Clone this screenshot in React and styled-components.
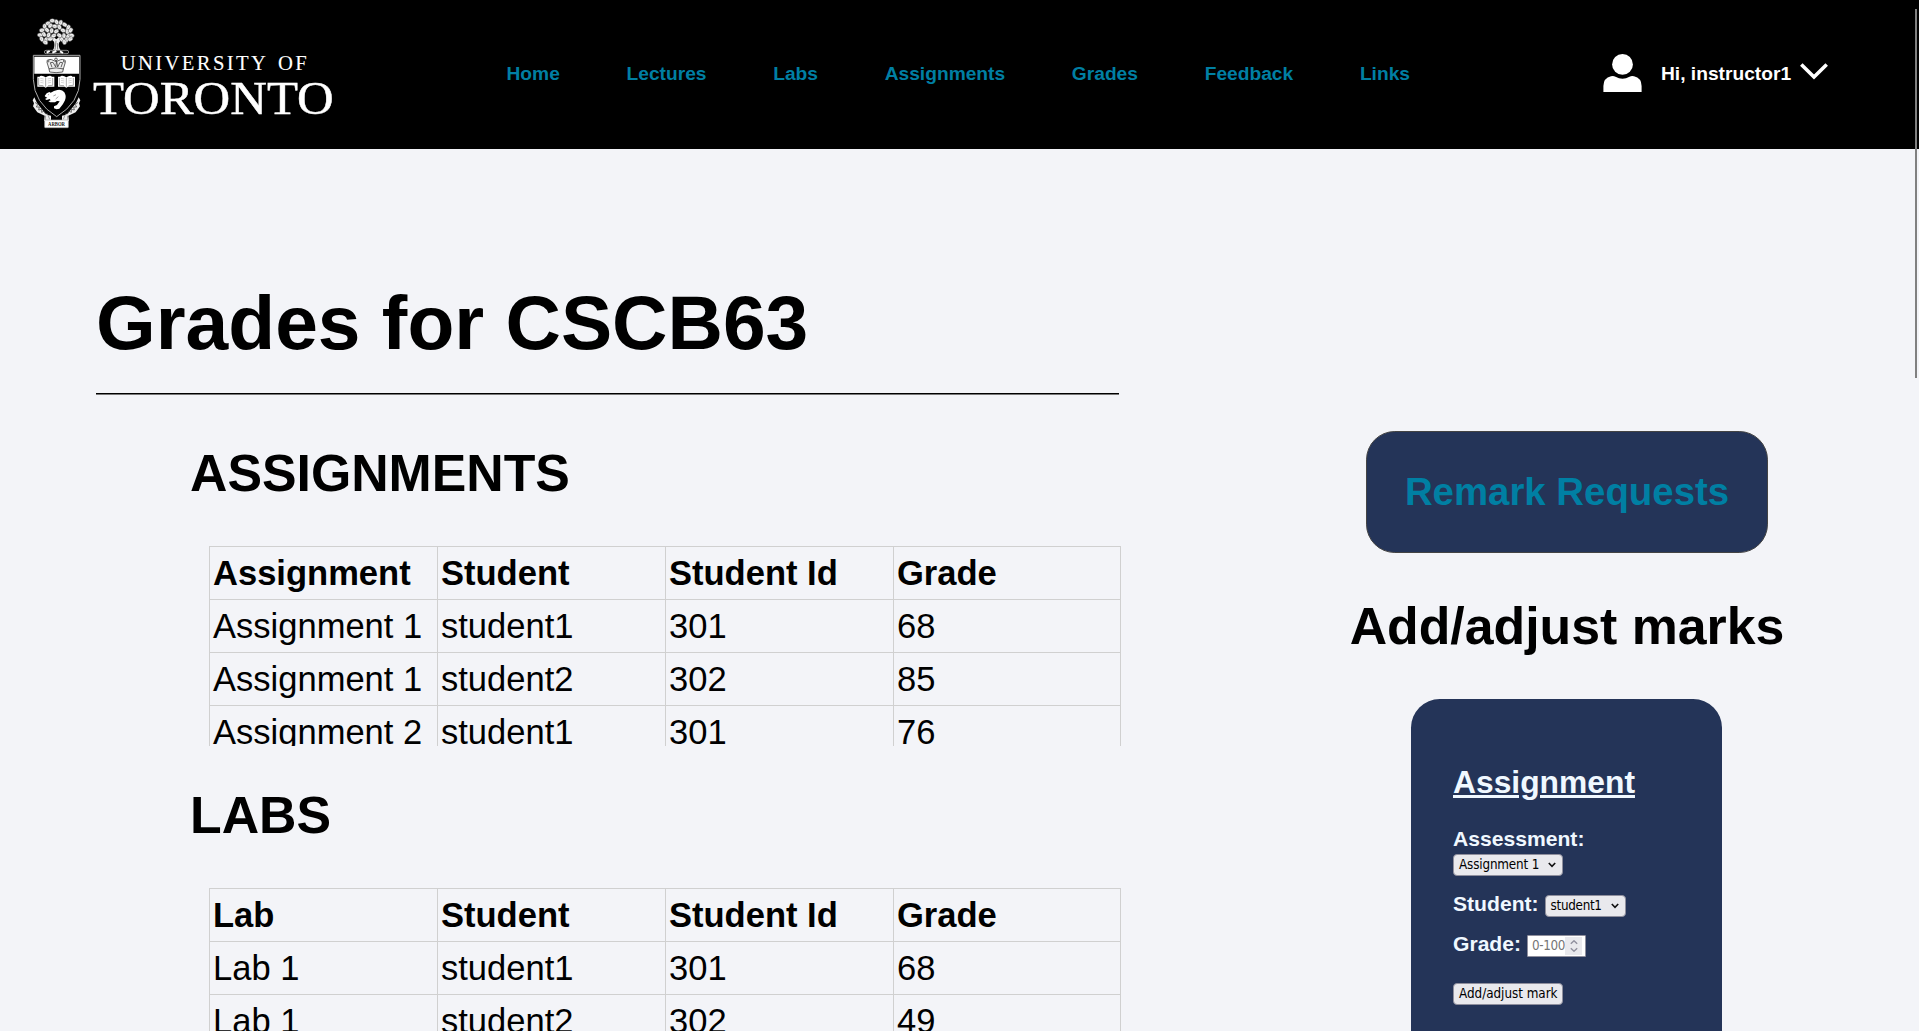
import React from "react";
import styled, { createGlobalStyle } from "styled-components";

const GlobalStyle = createGlobalStyle`
  * { box-sizing: border-box; }
  html, body {
    margin: 0;
    height: 1031px;
    overflow: hidden;
    background: #f3f4f8;
    color: #000;
    font-family: Arial, "Liberation Sans", sans-serif;
  }
`;

const Page = styled.div`
  height: 1031px;
  overflow: hidden;
`;

const Header = styled.header`
  display: flex;
  align-items: flex-start;
  height: 149px;
  padding-left: 20px;
  background: #000;
`;

const Logo = styled.svg`
  flex: none;
  width: 330px;
  height: 149px;
`;

const Nav = styled.nav`
  display: flex;
  flex: none;
  gap: 66.7px;
  width: 1040px;
  padding: 63px 0 0 156.5px;
`;

const NavLink = styled.a`
  color: #007fa3;
  font-size: 19.19px;
  font-weight: bold;
  line-height: 22px;
  white-space: nowrap;
`;

const User = styled.div`
  display: flex;
  align-items: flex-start;
  padding: 53px 0 0 213px;
`;

const Avatar = styled.svg`
  width: 39px;
  height: 39px;
  margin-top: 1px;
`;

const Greeting = styled.span`
  width: 129px;
  margin: 10px 9px 0 19px;
  color: #fff;
  font-size: 19.19px;
  font-weight: bold;
  line-height: 22px;
  white-space: nowrap;
`;

const MenuArrow = styled.svg`
  width: 30px;
  height: 20px;
  margin-top: 8px;
`;

const Main = styled.main`
  display: flex;
  justify-content: space-between;
`;

const GradesColumn = styled.div`
  width: 1121px;
  padding: 130px 0 0 96px;
`;

const Title = styled.h1`
  margin: 0;
  font-size: 76.76px;
  line-height: 88px;
`;

const Rule = styled.div`
  width: 1023px;
  height: 2px;
  margin: 26px 0 48px;
  border-top: 1px solid #000;
  border-bottom: 1px solid #777;
`;

const SectionTitle = styled.h2`
  margin: 0 0 43px;
  font-size: 51.8px;
  line-height: 60px;
  white-space: nowrap;
`;

const Section = styled.section`
  margin: 0 0 39px 94px;
`;

const TableWindow = styled.div`
  width: 912px;
  height: 200px;
  margin-left: 19px;
  overflow: hidden;
`;

const Row = styled.div`
  display: grid;
  grid-template-columns: repeat(4, 228px);
  border-right: 1px solid #d0d0d0;
  font-weight: ${(p) => (p.$head ? "bold" : "normal")};
`;

const Cell = styled.div`
  height: 53px;
  padding-left: 3px;
  border-top: 1px solid #d0d0d0;
  border-left: 1px solid #d0d0d0;
  font-size: 34.54px;
  line-height: 52px;
  white-space: nowrap;
`;

const Side = styled.aside`
  display: flex;
  flex-direction: column;
  align-items: center;
  width: 704px;
  padding-top: 282px;
`;

const RemarkButton = styled.a`
  width: 402px;
  height: 122px;
  margin-bottom: 43px;
  padding: 38px 0;
  border: 1px solid #444;
  border-radius: 28.8px;
  background: #243458;
  color: #007fa3;
  font-size: 38.38px;
  font-weight: bold;
  line-height: 44px;
  text-align: center;
`;

const Panel = styled.form`
  width: 311px;
  height: 420px;
  margin-right: 1px;
  padding: 65px 42px 0;
  border-radius: 28.8px;
  background: #243458;
  color: #f0f8ff;
`;

const PanelTitle = styled.h3`
  margin: 0 0 27px;
  font-size: 31.8px;
  line-height: 36px;
  text-decoration: underline;
  text-decoration-thickness: 3px;
`;

const Field = styled.div`
  display: flex;
  flex-direction: ${(p) => (p.$stacked ? "column" : "row")};
  align-items: flex-start;
  gap: ${(p) => (p.$stacked ? "3px" : "6px")};
  margin-bottom: ${(p) => p.$after}px;
`;

const Label = styled.label`
  font-size: 21.11px;
  font-weight: bold;
  line-height: 24px;
`;

const Control = styled.div`
  display: flex;
  align-items: center;
  justify-content: space-between;
  width: ${(p) => p.$width}px;
  height: 22px;
  margin-top: ${(p) => p.$drop || 0}px;
  padding: 0 6px 0 5px;
  border: 1px solid #8f8f9d;
  border-radius: 4px;
  background: #e9e9ed;
  color: #000;
  font-family: "DejaVu Sans Condensed", "DejaVu Sans", sans-serif;
  font-stretch: condensed;
  font-size: 13.33px;
  line-height: 20px;
  letter-spacing: ${(p) => p.$tracking || "-0.35px"};
  white-space: nowrap;
`;

const NumberBox = styled(Control)`
  padding: 1px 3px 1px 4px;
  border-radius: 1px;
  background: #fff;
  color: #757575;
`;

const Spinner = styled.span`
  display: flex;
  align-items: center;
  justify-content: center;
  width: 18px;
  height: 18px;
  background: #e9e9ed;
`;

const Scrollbar = styled.div`
  position: absolute;
  top: 9px;
  left: 1915px;
  width: 2px;
  height: 369px;
  background: #808080;
`;

const leaves = [
  [97, 62], [110, 66], [122, 68], [84, 70], [134, 74], [74, 79], [91, 77], [104, 79], [118, 81],
  [145, 82], [66, 91], [81, 90], [95, 92], [109, 94], [129, 91], [142, 95], [152, 91], [60, 105],
  [72, 103], [86, 105], [101, 107], [118, 106], [132, 107], [145, 108], [155, 106], [65, 117],
  [78, 119], [91, 117], [126, 119], [139, 120], [151, 117], [76, 127], [133, 126],
];

function OpenBook({ x }) {
  return (
    <g transform={`translate(${x} 228)`}>
      <path d="M0 2h7l1-2q9-2 17 4 8-6 17-4l1 2h8v30H30l-5 3-5-3H0z" fill="#fff" />
      <path d="M25 5v27M4 6v22l14 1M46 6v22l-14 1" fill="none" stroke="#555" strokeWidth="1.5" />
      <path d="M9 7l10 2M9 13l10 2M9 19l10 2M31 9l10-2M31 15l10-2M31 21l10-2" stroke="#aaa" strokeWidth="1.5" />
    </g>
  );
}

function Ribbon({ mirrored }) {
  return (
    <g transform={mirrored ? "matrix(-1 0 0 1 219 0)" : undefined}>
      <path d="M43 292l-5 9 4 9-3 9 13 18 22 10-2 16 21 3V347q-14-1-23-14-10-12-19-24z" fill="#eee" />
      <path d="M45 307l8 7-4 7 9 0-2 9 9-2 0 9 8-4 3 8 8 0" fill="none" stroke="#333" strokeWidth="2" />
      <path d="M77 347l-2 14M84 345l5 13" stroke="#777" strokeWidth="2" />
    </g>
  );
}

function UniversityLogo() {
  return (
    <Logo viewBox="0 0 990 447">
      <g>
        <path d="M98 151q8-11 4-26l-14-15 8-3 13 11 15-12 7 4-14 18q-3 11 5 23z" fill="#eee" />
        {leaves.map(([x, y], i) => (
          <g key={i} transform={`translate(${x} ${y}) rotate(${(i * 53) % 180})`}>
            <ellipse rx="8" ry="6" fill="#f4f4f4" stroke="#555" strokeWidth="1.5" />
            <path d="M-5 0l8 1" stroke="#999" strokeWidth="1.5" />
          </g>
        ))}
        <path d="M105 149l3-27M113 149l-1-20" stroke="#555" strokeWidth="2" />
        <rect x="73" y="151" width="73" height="10" rx="5" fill="#111" stroke="#bbb" strokeWidth="2" />
        <path d="M80 158l9-5M97 158l12-5M120 154l9 5" stroke="#fff" strokeWidth="6" />
      </g>
      <Ribbon />
      <Ribbon mirrored />
      <path d="M40 166h140v72q-1 70-70 112Q42 308 40 238z" fill="#000" stroke="#aaa" strokeWidth="3" />
      <path d="M43 170h134v51H43z" fill="#fff" />
      <g fill="#eee" stroke="#444" strokeWidth="2.5">
        <path d="M87 207l-6-20q3-11 14-8l13 6 14-6q12-3 14 8l-6 20z" />
        <path d="M87 207q21-7 43 0l-2 9q-20 4-39 0z" />
        <path d="M96 202l-5-14 8-1 8 14 3-17 3 17 7-14 8 1-5 14" fill="none" />
        <circle cx="108" cy="178" r="4" />
        <circle cx="84" cy="183" r="3" />
        <circle cx="133" cy="183" r="3" />
      </g>
      <OpenBook x={52} />
      <OpenBook x={114} />
      <path
        d="M74 288l6-8 8-4 4 2q10-6 20-8 14-3 21 7 7 11 2 24-5 13-17 25l-8 2-8-3 0-6 9-4 8-11-8-1-6 4-14 0-6-3 7-3-3-4-9 3-5-3 7-4-5-2z"
        fill="#fff"
      />
      <path d="M84 284h3M100 288l8-4M107 297l8-7" stroke="#777" strokeWidth="2" />
      <rect x="74" y="360" width="71" height="23" rx="2" fill="#fff" stroke="#aaa" strokeWidth="2" />
      <text x="84" y="378" fontFamily="Liberation Serif, serif" fontWeight="bold" fontSize="18" textLength="51" lengthAdjust="spacingAndGlyphs" fill="#222">
        ARBOR
      </text>
      <g fill="#fff" stroke="#fff" fontFamily="Liberation Serif, serif">
        <text x="302" y="211" fontSize="62" strokeWidth="0.3" textLength="436" lengthAdjust="spacing">
          UNIVERSITY
        </text>
        <text x="774" y="211" fontSize="62" strokeWidth="0.3" textLength="86" lengthAdjust="spacing">
          OF
        </text>
        <text x="219" y="341" fontSize="140" strokeWidth="1.4" textLength="722" lengthAdjust="spacingAndGlyphs">
          TORONTO
        </text>
      </g>
    </Logo>
  );
}

function SelectArrow() {
  return (
    <svg width="8" height="6" viewBox="0 0 8 6">
      <path d="M.8 1L4 4.4 7.2 1" fill="none" stroke="#111" strokeWidth="1.6" />
    </svg>
  );
}

function GradesTable({ rows }) {
  return (
    <TableWindow>
      {rows.map((row, i) => (
        <Row key={i} $head={i === 0}>
          {row.map((text, j) => (
            <Cell key={j}>{text}</Cell>
          ))}
        </Row>
      ))}
    </TableWindow>
  );
}

const links = ["Home", "Lectures", "Labs", "Assignments", "Grades", "Feedback", "Links"];

const assignments = [
  ["Assignment", "Student", "Student Id", "Grade"],
  ["Assignment 1", "student1", "301", "68"],
  ["Assignment 1", "student2", "302", "85"],
  ["Assignment 2", "student1", "301", "76"],
];

const labs = [
  ["Lab", "Student", "Student Id", "Grade"],
  ["Lab 1", "student1", "301", "68"],
  ["Lab 1", "student2", "302", "49"],
];

export default function App() {
  return (
    <Page>
      <GlobalStyle />
      <Header>
        <UniversityLogo />
        <Nav>
          {links.map((link) => (
            <NavLink key={link}>{link}</NavLink>
          ))}
        </Nav>
        <User>
          <Avatar viewBox="0 0 39 39" fill="#fff">
            <circle cx="19.500" cy="10.400" r="10.400" />
            <path d="M.4 38V32Q.4 24 8 22.200Q10.500 21.500 12.500 22.700Q19.500 26.800 26.500 22.700Q28.500 21.500 31 22.200Q38.600 24 38.600 32V38Z" />
          </Avatar>
          <Greeting>Hi, instructor1</Greeting>
          <MenuArrow viewBox="0 0 30 20">
            <path d="M2.300 3.500L15 16L27.700 3.500" fill="none" stroke="#fff" strokeWidth="3.600" />
          </MenuArrow>
        </User>
      </Header>
      <Main>
        <GradesColumn>
          <Title>Grades for CSCB63</Title>
          <Rule />
          <Section>
            <SectionTitle>ASSIGNMENTS</SectionTitle>
            <GradesTable rows={assignments} />
          </Section>
          <Section>
            <SectionTitle>LABS</SectionTitle>
            <GradesTable rows={labs} />
          </Section>
        </GradesColumn>
        <Side>
          <RemarkButton>Remark Requests</RemarkButton>
          <SectionTitle>Add/adjust marks</SectionTitle>
          <Panel>
            <PanelTitle>Assignment</PanelTitle>
            <Field $stacked $after={16}>
              <Label>Assessment:</Label>
              <Control $width={110} $tracking="-0.15px">
                Assignment 1<SelectArrow />
              </Control>
            </Field>
            <Field $after={15}>
              <Label>Student:</Label>
              <Control $width={81} $drop={3} $tracking="-0.3px">
                student1<SelectArrow />
              </Control>
            </Field>
            <Field $after={26}>
              <Label>Grade:</Label>
              <NumberBox $width={59} $drop={3}>
                0-100
                <Spinner>
                  <svg width="8" height="12" viewBox="0 0 8 12">
                    <path d="M.8 3.800L4 .8L7.200 3.800M.8 8.200L4 11.200L7.200 8.200" fill="none" stroke="#8f8f9d" strokeWidth="1.4" />
                  </svg>
                </Spinner>
              </NumberBox>
            </Field>
            <Control $width={110} $tracking="-0.02px">Add/adjust mark</Control>
          </Panel>
        </Side>
      </Main>
      <Scrollbar />
    </Page>
  );
}
